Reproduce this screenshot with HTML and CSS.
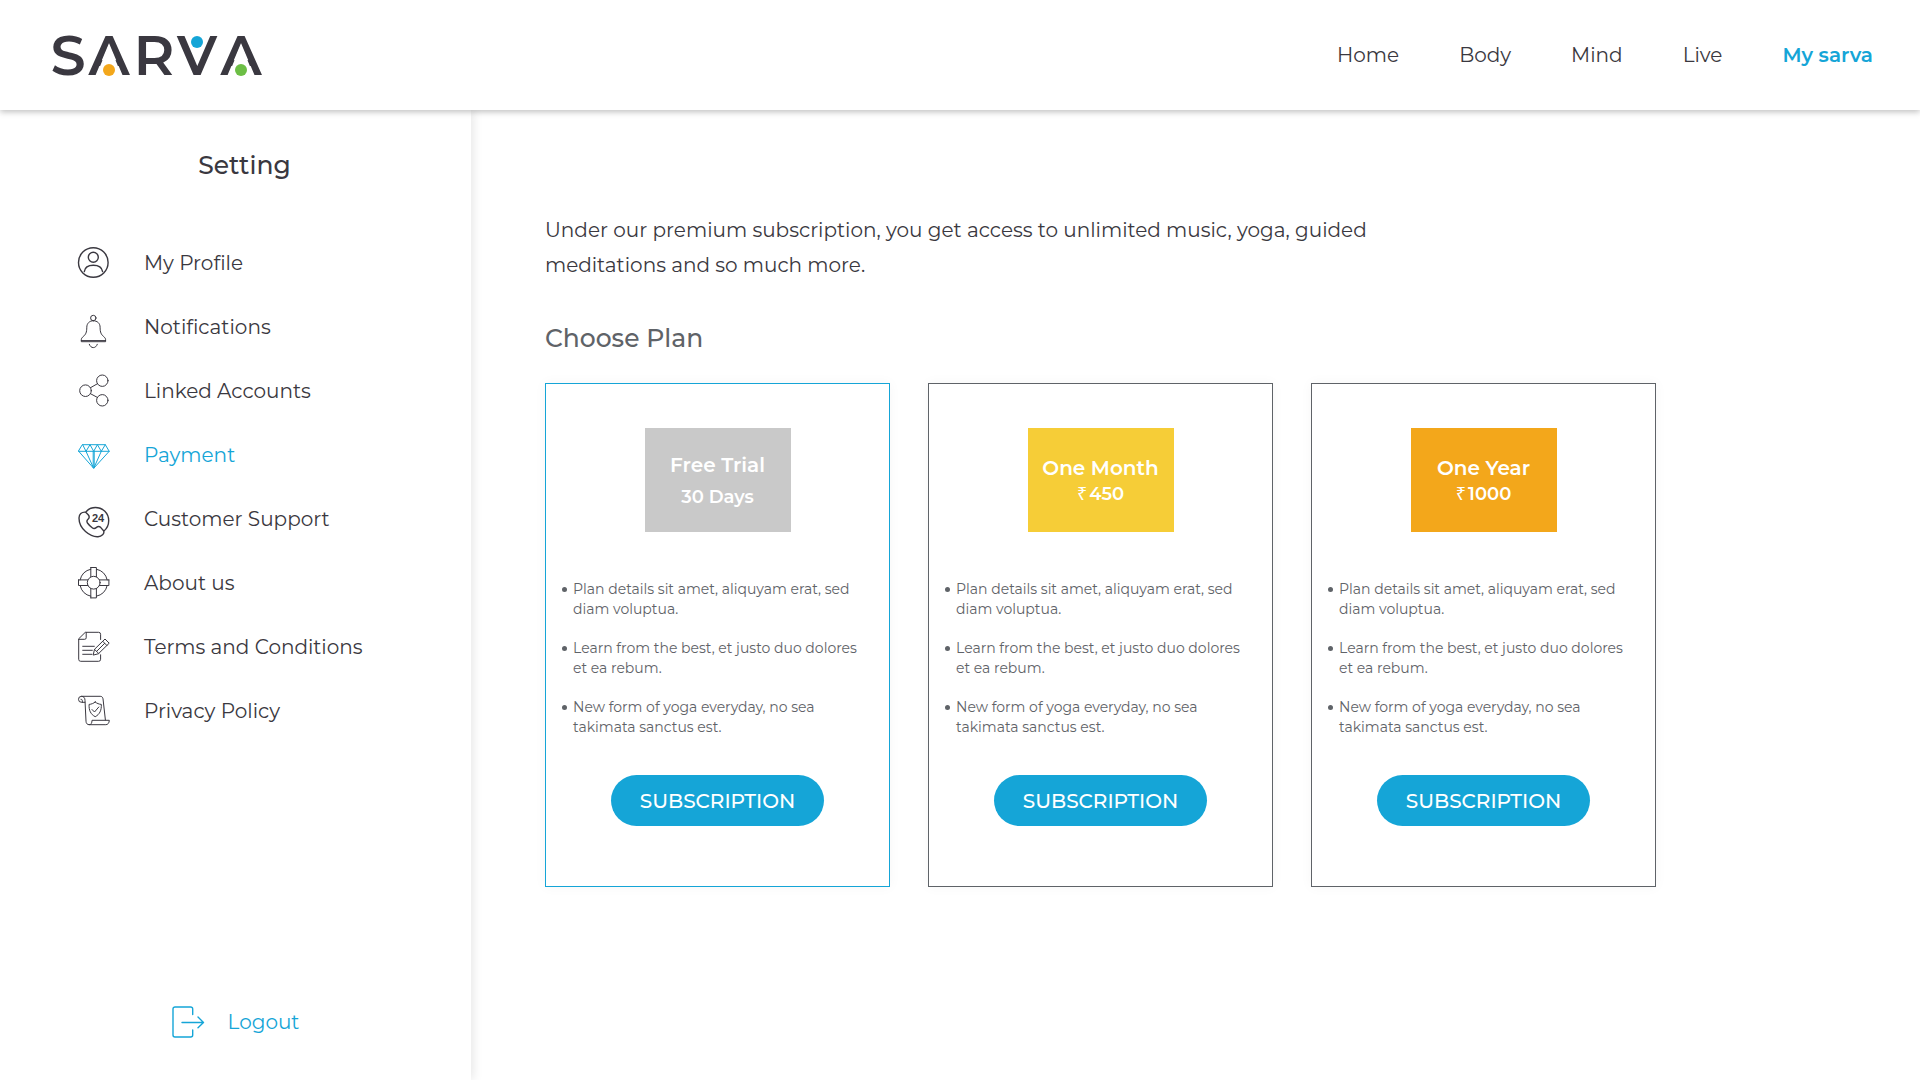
FILE: index.html
```html
<!DOCTYPE html>
<html lang="en">
<head>
<meta charset="utf-8">
<meta name="viewport" content="width=device-width, initial-scale=1">
<title>Sarva – Payment</title>
<link rel="stylesheet" href="styles.css">
</head>
<body>
<header class="topbar">
  <a class="logo" href="#" aria-label="Sarva">
    <svg width="230" height="90" viewBox="-10 -24 230 90">
      <g class="logo-letters">
        <text x="17" y="41">S</text>
        <text class="logo-peak" x="58" y="41">A</text>
        <text x="103" y="41">R</text>
        <text class="logo-peak" x="146" y="41">V</text>
        <text class="logo-peak" x="190" y="41">A</text>
      </g>
      <!-- open the counters of both A's so that the dots can sit inside -->
      <path d="M58 10.500L71 42H45zM190 10.500L203 42H177z" fill="#fff"/>
      <circle cx="58" cy="36" r="6" fill="#f3a71b"/>
      <circle cx="146" cy="8" r="6" fill="#15a5d7"/>
      <circle cx="190" cy="36" r="6" fill="#6cbe45"/>
    </svg>
  </a>
  <nav class="nav">
    <a href="#">Home</a>
    <a href="#">Body</a>
    <a href="#">Mind</a>
    <a href="#">Live</a>
    <a class="current" href="#">My sarva</a>
  </nav>
</header>

<div class="layout">
  <aside class="sidebar">
    <h1 class="sidebar-title">Setting</h1>
    <ul class="menu">
      <li><a href="#">
        <svg class="icon bold" viewBox="0 0 32 32"><circle cx="16.300" cy="15.500" r="14.800"/><circle cx="16.300" cy="10.300" r="5"/><path d="M7.300 24.600c.5-4 4-6.400 9-6.400s8.700 2.400 9.300 6.400"/></svg>
        My Profile</a></li>
      <li><a href="#">
        <svg class="icon" viewBox="0 0 32 32"><circle cx="16.300" cy="7" r="2.700"/><path d="M16.300 9.700c-4 0-6.500 2.900-6.500 6.500 0 5.500-1.200 7.300-3.500 9.300-1.300 1.100-2 2-2 3.200v2h24.300v-2c0-1.200-.7-2.100-2-3.200-2.300-2-3.500-3.800-3.500-9.300 0-3.600-2.500-6.500-6.800-6.500zM4.300 29.600h24.300M12.300 33.300c.8 2.100 2.200 3.300 4 3.300s3.200-1.200 4-3.300"/></svg>
        Notifications</a></li>
      <li><a href="#">
        <svg class="icon" viewBox="0 0 32 32"><circle cx="25.300" cy="5.700" r="5.700"/><circle cx="8.500" cy="15.700" r="5.800"/><circle cx="25.300" cy="25.300" r="5.700"/><path d="M13.500 12.700l7-4M13.500 18.700l7 3.800"/></svg>
        Linked Accounts</a></li>
      <li class="active"><a href="#">
        <svg class="icon" viewBox="0 0 32 32"><path d="M5.700 5.700h22.600l3.900 6.600L16.700 29.300 1.700 12.300zM1.700 12.300h30.500M5.700 5.700L9 12.300l4-6.600 3.700 6.600 3.700-6.600 3.900 6.600 4-6.600M9 12.300l7.700 17 7.600-17M16.200 12.300v16M17.200 12.300v16"/></svg>
        Payment</a></li>
      <li><a href="#">
        <svg class="icon bold" viewBox="0 0 32 32"><path d="M8.700 9.200C11.200 6 14.600 4.500 18.400 4.500c7.500 0 13.300 5.900 13.300 13.200 0 4-1.700 7.800-5 10.500M8.700 9.200C4.500 8.700 2 11.300 2 15c0 5 2.500 10 6.500 13.500s8.300 5.500 12.500 5.200c3.800-.3 6.500-3 5.800-5.700l-3-3.400c-1.500-1.500-3-1.300-4.600 0-1.400 1.200-2.600 1.200-4 .1-2-1.400-3.400-2.800-4.700-4.700-.9-1.400-.8-2.600.5-3.800 1.500-1.400 1.600-2.900.2-4.500z"/><text class="icon-text" x="15" y="19">24</text></svg>
        Customer Support</a></li>
      <li><a href="#">
        <svg class="icon" viewBox="0 0 32 32"><circle cx="16.700" cy="15.700" r="6.400"/><path d="M13.800.5h5.600v9.400M13.800.5v9.400M13.800 30.900h5.600v-9.400M13.800 30.900v-9.400M1.500 12.900v5.600h9.400M1.500 12.900h9.400M31.900 12.900v5.600h-9.400M31.900 12.900h-9.400M13.800 2.200A14 14 0 0 0 3.100 12.900M19.400 2.200a14 14 0 0 1 10.800 10.700M30.200 18.500a14 14 0 0 1-10.800 10.700M13.800 29.200A14 14 0 0 1 3.100 18.500"/></svg>
        About us</a></li>
      <li><a href="#">
        <svg class="icon" viewBox="0 0 32 32"><path d="M23.600 8.500V3.300a2 2 0 0 0-2-2H8.300L1.700 7.800v20.500a2 2 0 0 0 2 2h17.900a2 2 0 0 0 2-2v-4.500M9.200 1.500v5.300a1.500 1.500 0 0 1-1.500 1.500H1.800M5.700 15.300h11.600M5.700 19.300h9.600M5.700 23.300h9.300M16.300 23.700l1.200-5.400L28 8l4.200 4.200-10.500 10.300zM17.500 18.300l4.200 4.200M25.700 10.300l4.200 4.200M19.700 20.300l8-8"/></svg>
        Terms and Conditions</a></li>
      <li><a href="#">
        <svg class="icon" viewBox="0 0 32 32"><path d="M7.900 7.300H4.500a3 3 0 0 1 0-6h18.700c1.600 0 2.500.9 2.800 2.500L28.400 25M4.500 1.300C7 1.300 8 3 8 5.500l1 20.700c.1 2.200 1.200 3.500 3.300 3.500h16.500c2 0 3.400-1.600 3.500-4.400H15c0 2.700-.7 4.400-2.700 4.400M5.300 7.300V5.500c0-.8-.5-1.200-1.300-1.200M18.200 7c1.800 1.500 3.800 2.200 6.100 2.400.3 5.900-1.500 9.900-6.100 12.300-4.600-2.400-6.400-6.400-6.100-12.300 2.300-.2 4.300-.9 6.100-2.400zM15 14.500l2.500 2.500 4.300-5"/></svg>
        Privacy Policy</a></li>
    </ul>
    <a class="logout" href="#">
      <svg class="icon bold" viewBox="0 0 32 32"><path d="M20.700 8.500V3a2 2 0 0 0-2-2H3a2 2 0 0 0-2 2v26a2 2 0 0 0 2 2h15.700a2 2 0 0 0 2-2v-5M10 16.500h21M26 11l5.500 5.500L26 21.700"/></svg>
      Logout</a>
  </aside>

  <main class="content">
    <p class="intro">Under our premium subscription, you get access to unlimited music, yoga, guided meditations and so much more.</p>
    <h2 class="plans-title">Choose Plan</h2>
    <div class="plans">
      <section class="plan selected">
        <div class="badge trial"><h3>Free Trial</h3><p>30 Days</p></div>
        <ul class="features">
          <li>Plan details sit amet, aliquyam erat, sed diam voluptua.</li>
          <li>Learn from the best, et justo duo dolores et ea rebum.</li>
          <li>New form of yoga everyday, no sea takimata sanctus est.</li>
        </ul>
        <button class="subscribe" type="button">SUBSCRIPTION</button>
      </section>
      <section class="plan">
        <div class="badge month"><h3>One Month</h3><p><span class="currency">₹</span>450</p></div>
        <ul class="features">
          <li>Plan details sit amet, aliquyam erat, sed diam voluptua.</li>
          <li>Learn from the best, et justo duo dolores et ea rebum.</li>
          <li>New form of yoga everyday, no sea takimata sanctus est.</li>
        </ul>
        <button class="subscribe" type="button">SUBSCRIPTION</button>
      </section>
      <section class="plan">
        <div class="badge year"><h3>One Year</h3><p><span class="currency">₹</span>1000</p></div>
        <ul class="features">
          <li>Plan details sit amet, aliquyam erat, sed diam voluptua.</li>
          <li>Learn from the best, et justo duo dolores et ea rebum.</li>
          <li>New form of yoga everyday, no sea takimata sanctus est.</li>
        </ul>
        <button class="subscribe" type="button">SUBSCRIPTION</button>
      </section>
    </div>
  </main>
</div>
</body>
</html>
```
FILE: styles.css
```css
:root {
  --ink: #3a3840;
  --muted: #5f6368;
  --accent: #15a5d7;
}

* { box-sizing: border-box; }

body {
  margin: 0;
  min-height: 100vh;
  display: flex;
  flex-direction: column;
  background: #fff;
  color: var(--ink);
  font-family: Montserrat, Inter, sans-serif;
  font-size: 20px;
  line-height: 32px;
}

h1, h2, h3, p, ul { margin: 0; padding: 0; font-weight: 400; }
ul { list-style: none; }
a { color: inherit; text-decoration: none; }

.topbar {
  position: relative;
  display: flex;
  align-items: center;
  justify-content: space-between;
  min-height: 110px;
  padding: 0 47px 0 41px;
  background: #fff;
  box-shadow: 0 2px 6px rgba(0, 0, 0, .25);
}

.logo svg { display: block; overflow: visible; }
.logo-letters {
  fill: var(--ink);
  font-size: 56px;
  font-weight: 600;
  text-anchor: middle;
}
.logo-peak { font-size: 55px; }

.nav { display: flex; flex-wrap: wrap; gap: 0 60px; }
.current { color: var(--accent); font-weight: 600; }

.layout { display: flex; flex: 1; }

.sidebar {
  display: flex;
  flex: 0 0 471px;
  flex-direction: column;
  padding: 39px 0 42px;
  box-shadow: 2px 0 10px rgba(0, 0, 0, .1);
}
.sidebar-title {
  margin-bottom: 50px;
  padding-left: 18px;
  font-size: 25px;
  font-weight: 500;
  text-align: center;
}
.menu a {
  display: flex;
  align-items: center;
  gap: 35px;
  height: 64px;
  padding-left: 77px;
}
.active, .logout { color: var(--accent); }

.icon {
  flex: none;
  width: 32px;
  height: 32px;
  overflow: visible;
  fill: none;
  stroke: currentColor;
  stroke-width: 1;
  stroke-linecap: round;
  stroke-linejoin: round;
}
.icon.bold { stroke-width: 1.4; }
.icon-text { fill: currentColor; stroke: none; font-family: "Liberation Sans", sans-serif; font-size: 11px; font-weight: 700; }

.logout {
  display: flex;
  align-items: center;
  justify-content: center;
  gap: 24px;
  margin-top: auto;
}

.content { flex: 1; min-width: 0; padding: 103px 74px; }
.intro { max-width: 860px; line-height: 35px; }
.plans-title {
  margin: 39px 0 29px;
  color: var(--muted);
  font-size: 25px;
  font-weight: 500;
}

.plans {
  display: grid;
  grid-template-columns: repeat(3, 1fr);
  gap: 38px;
  max-width: 1111px;
}
.plan {
  display: flex;
  flex-direction: column;
  align-items: center;
  padding: 44px 16px 60px;
  border: 1px solid var(--muted);
  box-shadow: 0 0 12px rgba(0, 0, 0, .04);
}
.plan.selected { border-color: var(--accent); }

.badge {
  display: flex;
  flex-direction: column;
  align-items: center;
  justify-content: center;
  width: 146px;
  height: 104px;
  padding-top: 2px;
  color: #fff;
  font-size: 18px;
  line-height: 26px;
}
.badge h3 { font-size: 20px; font-weight: 600; }
.badge p { font-weight: 600; }
.trial { background: #c9c9c9; line-height: 32px; }
.month { background: #f6cd37; }
.year { background: #f3a71b; }
.currency { margin-right: 2px; font-family: "Noto Sans", sans-serif; font-weight: 400; line-height: 1; }

.features {
  display: grid;
  gap: 19px;
  align-self: stretch;
  margin: 47px 0 38px;
  color: var(--muted);
  font-size: 14px;
  line-height: 20px;
}
.features li { display: flex; gap: 6px; }
.features li::before {
  content: "";
  flex: none;
  width: 5px;
  height: 5px;
  margin-top: 8px;
  border-radius: 50%;
  background: var(--muted);
}

.subscribe {
  width: 213px;
  height: 51px;
  border: 0;
  border-radius: 26px;
  background: var(--accent);
  color: #fff;
  font: inherit;
  font-size: 20px;
  font-weight: 500;
  cursor: pointer;
}

@media (max-width: 1400px) {
  .sidebar { flex-basis: 380px; }
  .sidebar .menu a { padding-left: 32px; gap: 24px; }
  .content { padding: 48px 32px; }
  .plans { grid-template-columns: repeat(auto-fill, minmax(300px, 1fr)); }
}
@media (max-width: 800px) {
  .topbar { flex-wrap: wrap; gap: 16px; padding: 24px; }
  .nav { gap: 0 24px; }
  .layout { flex-direction: column; }
  .sidebar { flex-basis: auto; }
}
```
